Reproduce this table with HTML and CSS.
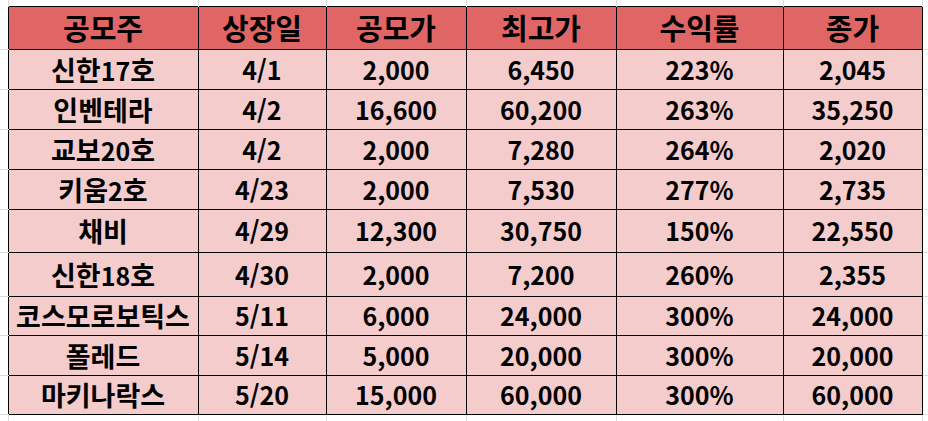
FILE: index.html
```html
<!DOCTYPE html>
<html lang="ko">
<head>
<meta charset="utf-8">
<link rel="stylesheet" href="styles.css">
</head>
<body>
<table class="sheet">
  <colgroup>
    <col class="c-m1"><col class="c1"><col class="c2"><col class="c3"><col class="c4"><col class="c5"><col class="c6"><col class="c-m2">
  </colgroup>
  <tr class="r-top">
    <td class="gx"></td><td class="gv"></td><td class="gv"></td><td class="gv"></td><td class="gv"></td><td class="gv"></td><td class="gv"></td><td class="gx"></td>
  </tr>
  <tr class="r-head">
    <td class="gh"></td><th>공모주</th><th>상장일</th><th>공모가</th><th>최고가</th><th>수익률</th><th>종가</th><td class="gh"></td>
  </tr>
  <tr class="r40"><td class="gh"></td><td><span class="k">신한</span>17<span class="k">호</span></td><td>4/1</td><td>2,000</td><td>6,450</td><td>223%</td><td>2,045</td><td class="gh"></td></tr>
  <tr class="r40"><td class="gh"></td><td><span class="k">인벤테라</span></td><td>4/2</td><td>16,600</td><td>60,200</td><td>263%</td><td>35,250</td><td class="gh"></td></tr>
  <tr class="r40"><td class="gh"></td><td><span class="k">교보</span>20<span class="k">호</span></td><td>4/2</td><td>2,000</td><td>7,280</td><td>264%</td><td>2,020</td><td class="gh"></td></tr>
  <tr class="r40"><td class="gh"></td><td><span class="k">키움</span>2<span class="k">호</span></td><td>4/23</td><td>2,000</td><td>7,530</td><td>277%</td><td>2,735</td><td class="gh"></td></tr>
  <tr class="r43"><td class="gh"></td><td><span class="k">채비</span></td><td>4/29</td><td>12,300</td><td>30,750</td><td>150%</td><td>22,550</td><td class="gh"></td></tr>
  <tr class="r44"><td class="gh"></td><td><span class="k">신한</span>18<span class="k">호</span></td><td>4/30</td><td>2,000</td><td>7,200</td><td>260%</td><td>2,355</td><td class="gh"></td></tr>
  <tr class="r39"><td class="gh"></td><td><span class="k">코스모로보틱스</span></td><td>5/11</td><td>6,000</td><td>24,000</td><td>300%</td><td>24,000</td><td class="gh"></td></tr>
  <tr class="r40"><td class="gh"></td><td><span class="k">폴레드</span></td><td>5/14</td><td>5,000</td><td>20,000</td><td>300%</td><td>20,000</td><td class="gh"></td></tr>
  <tr class="r39"><td class="gh"></td><td><span class="k">마키나락스</span></td><td>5/20</td><td>15,000</td><td>60,000</td><td>300%</td><td>60,000</td><td class="gh"></td></tr>
  <tr class="r-bot">
    <td class="gx"></td><td class="gv"></td><td class="gv"></td><td class="gv"></td><td class="gv"></td><td class="gv"></td><td class="gv"></td><td class="gx"></td>
  </tr>
</table>
</body>
</html>
```

FILE: styles.css
```css
html, body {
  margin: 0;
  padding: 0;
  background: #ffffff;
  overflow: hidden;
}

.sheet {
  border-collapse: collapse;
  table-layout: fixed;
  width: 928px;
  font-family: "Noto Sans CJK KR", "Noto Sans", sans-serif;
  font-weight: 700;
  font-size: 25px;
  color: #000;
}

.c-m1 { width: 8px; }
.c1 { width: 190px; }
.c2 { width: 128px; }
.c3 { width: 140px; }
.c4 { width: 150px; }
.c5 { width: 167px; }
.c6 { width: 139px; }
.c-m2 { width: 6px; }

.sheet td,
.sheet th {
  padding: 0;
  text-align: center;
  vertical-align: middle;
  white-space: nowrap;
  line-height: 1;
  border: 1px solid #000;
  background: #f4cccc;
}

.sheet th {
  background: #e06666;
  font-weight: 700;
  font-size: 29px;
}

.k {
  font-size: 27px;
}

.sheet td.gx,
.sheet td.gv,
.sheet td.gh {
  background: #ffffff;
  border: none;
}

.sheet td.gv {
  border-right: 1px solid #dadada;
}
.sheet td.gv:nth-child(2) {
  border-left: 1px solid #dadada;
}
.sheet td.gh {
  border-bottom: 1px solid #dadada;
}

.r-top { height: 6px; }
.r-head { height: 43px; }
.r39 { height: 39px; }
.r40 { height: 40px; }
.r43 { height: 43px; }
.r44 { height: 44px; }
.r-bot { height: 7px; }
```
